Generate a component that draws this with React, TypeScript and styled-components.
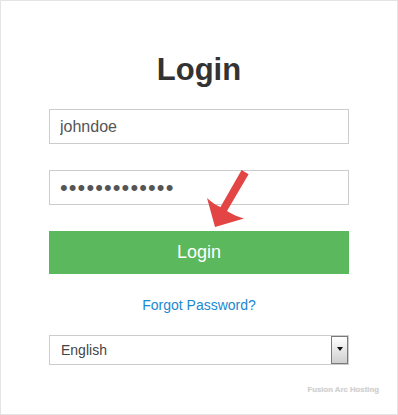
import React from "react";
import styled, {createGlobalStyle} from "styled-components";

const GlobalStyle = createGlobalStyle`
  html, body {
    margin: 0;
    padding: 0;
    background: #fff;
  }
  * {
    box-sizing: border-box;
  }
`;

const Frame = styled.div`
  position: relative;
  width: 398px;
  height: 415px;
  border: 1px solid #e4e4e4;
  background: #fff;
  font-family: "Liberation Sans", Arial, sans-serif;
  display: flex;
  flex-direction: column;
  align-items: center;
  padding-top: 53px;
`;

const Title = styled.h1`
  margin: 0;
  height: 31px;
  font-size: 31px;
  line-height: 31px;
  font-weight: bold;
  color: #333;
`;

const Form = styled.form`
  width: 300px;
  margin-top: 24px;
  display: flex;
  flex-direction: column;
  align-items: stretch;
`;

const TextInput = styled.input<{ $dots?: boolean }>`
  height: 35px;
  margin: 0 0 26px;
  padding: 0 10px;
  border: 1px solid #ccc;
  border-radius: 0;
  outline: none;
  background: #fff;
  color: #555;
  font-family: "Liberation Sans", Arial, sans-serif;
  font-size: ${(p) => (p.$dots ? "22px" : "16px")};
  letter-spacing: ${(p) => (p.$dots ? "1.1px" : "0")};
`;

const SubmitButton = styled.button`
  height: 43px;
  border: none;
  border-radius: 0;
  background: #5cb85c;
  color: #fff;
  font-family: "Liberation Sans", Arial, sans-serif;
  font-size: 18px;
  cursor: pointer;
`;

const ForgotLink = styled.a`
  display: block;
  margin-top: 24px;
  height: 14px;
  line-height: 14px;
  text-align: center;
  font-size: 14px;
  color: #1a88d2;
  text-decoration: none;
`;

const SelectBox = styled.div`
  margin-top: 23px;
  height: 30px;
  border: 1px solid #ccc;
  display: flex;
  align-items: stretch;
`;

const SelectValue = styled.span`
  flex: 1;
  display: flex;
  align-items: center;
  padding-left: 11px;
  font-size: 14px;
  color: #444;
`;

const SelectToggle = styled.span`
  width: 17px;
  border: 1px solid #7a7a7a;
  background: linear-gradient(#ffffff, #cfcfcf);
  display: flex;
  justify-content: center;
  padding-top: 10px;
`;

const Caret = styled.span`
  width: 0;
  height: 0;
  border-left: 3.5px solid transparent;
  border-right: 3.5px solid transparent;
  border-top: 4px solid #111;
`;

const Footer = styled.div`
  align-self: stretch;
  display: flex;
  justify-content: flex-end;
  padding-right: 18px;
  margin-top: 21px;
`;

const Credit = styled.span`
  font-size: 7.8px;
  line-height: 8px;
  font-weight: bold;
  color: #d2d2d2;
  text-shadow: 0 0 1px #e0e0e0;
`;

const Pointer = styled.svg`
  position: absolute;
  left: 0;
  top: 0;
  pointer-events: none;
`;

const App = () => {
    return (
        <>
            <GlobalStyle/>
            <Frame>
                <Title>Login</Title>
                <Form onSubmit={(e) => e.preventDefault()}>
                    <TextInput type="text" defaultValue="johndoe"/>
                    <TextInput $dots type="password" defaultValue="secretpass123"/>
                    <SubmitButton type="submit">Login</SubmitButton>
                    <ForgotLink href="#">Forgot Password?</ForgotLink>
                    <SelectBox>
                        <SelectValue>English</SelectValue>
                        <SelectToggle><Caret/></SelectToggle>
                    </SelectBox>
                </Form>
                <Footer>
                    <Credit>Fusion Arc Hosting</Credit>
                </Footer>
                {/* annotation arrow drawn over the form */}
                <Pointer width="398" height="415" viewBox="0 0 398 415">
                    <path
                        d="M240.6,169 L247.6,173.2 L226,210 Q233,214.5 243,217.5 L214,226 L206,197 Q213,203.5 219.5,206 Z"
                        fill="#e34545"
                    />
                </Pointer>
            </Frame>
        </>
    );
};

export default App;
